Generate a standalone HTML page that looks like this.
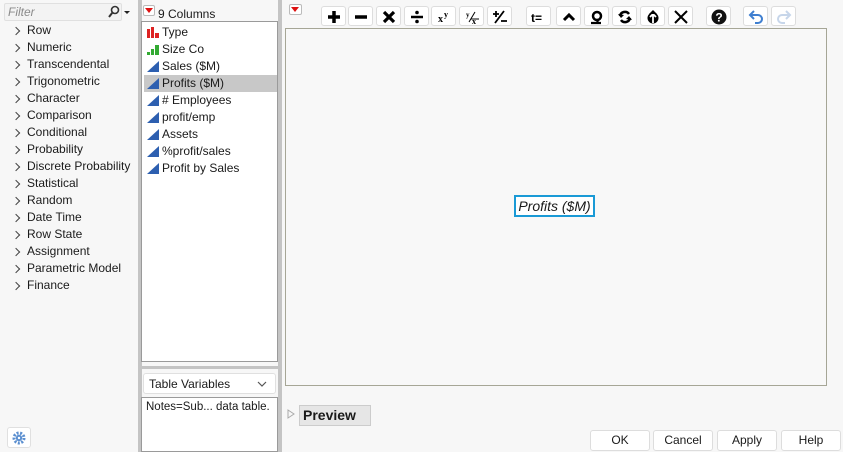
<!DOCTYPE html>
<html><head><meta charset="utf-8"><style>
*{margin:0;padding:0;box-sizing:border-box}
body{width:843px;height:452px;background:#f7f7f7;font-family:"Liberation Sans",sans-serif;font-size:12px;color:#1a1a1a;position:relative;overflow:hidden}
.a{position:absolute}
.li{position:absolute;left:27px;height:17px;line-height:17px;white-space:nowrap}
.li:before{content:"";position:absolute;left:-14px;top:6px;width:5px;height:5px;border-right:1.3px solid #444;border-top:1.3px solid #444;transform:rotate(45deg)}
.ci{position:absolute;left:2px;width:133px;height:17px;line-height:17px;padding-left:18px;white-space:nowrap}
.ic{position:absolute;left:3px;top:3px;width:12px;height:11px}
.tb{position:absolute;top:6px;width:25px;height:20px;background:#fff;border:1px solid #ddd;border-radius:3px}
.tb svg{position:absolute;left:4px;top:2px}
.btn{position:absolute;top:430px;width:60px;height:21px;background:#fff;border:1px solid #ddd;border-radius:3px;text-align:center;line-height:19px;font-size:12px}
</style></head><body>
<div class="a" style="left:4px;top:3px;width:118px;height:18px;background:#f3f3f3;border:1px solid #e0e0e0;border-radius:2px"></div>
<div class="a" style="left:8px;top:5px;color:#8a8a8a;font-style:italic">Filter</div>
<svg class="a" style="left:107px;top:5px" width="24" height="14"><circle cx="8" cy="5" r="3.5" fill="none" stroke="#333" stroke-width="1.6"/><line x1="5.5" y1="7.5" x2="2" y2="12" stroke="#333" stroke-width="2"/><path d="M17 6h6l-3 3z" fill="#222"/></svg>
<div class="li" style="top:22px">Row</div>
<div class="li" style="top:39px">Numeric</div>
<div class="li" style="top:56px">Transcendental</div>
<div class="li" style="top:73px">Trigonometric</div>
<div class="li" style="top:90px">Character</div>
<div class="li" style="top:107px">Comparison</div>
<div class="li" style="top:124px">Conditional</div>
<div class="li" style="top:141px">Probability</div>
<div class="li" style="top:158px">Discrete Probability</div>
<div class="li" style="top:175px">Statistical</div>
<div class="li" style="top:192px">Random</div>
<div class="li" style="top:209px">Date Time</div>
<div class="li" style="top:226px">Row State</div>
<div class="li" style="top:243px">Assignment</div>
<div class="li" style="top:260px">Parametric Model</div>
<div class="li" style="top:277px">Finance</div>
<div class="a" style="left:7px;top:427px;width:24px;height:21px;background:#fff;border:1px solid #e0e0e0;border-radius:3px"></div>
<svg class="a" style="left:12px;top:431px" width="14" height="14"><circle cx="7" cy="7" r="5" fill="none" stroke="#5b8fd0" stroke-width="3" stroke-dasharray="2 1.5"/><circle cx="7" cy="7" r="3.2" fill="#5b8fd0"/><circle cx="7" cy="7" r="1.2" fill="#fff"/></svg>
<div class="a" style="left:138px;top:0;width:4px;height:452px;background:#c4c4c4"></div>
<div class="a" style="left:278px;top:0;width:4px;height:452px;background:#c4c4c4"></div>
<div class="a" style="left:142px;top:0;width:136px;height:452px;background:#f7f7f7"></div>
<div class="a" style="left:143px;top:5px;width:12px;height:11px;background:#fff;border:1px solid #bbb;border-radius:2px"></div>
<svg class="a" style="left:145px;top:8px" width="9" height="6"><path d="M0 0h8l-4 5z" fill="#d11"/></svg>
<div class="a" style="left:158px;top:7px">9 Columns</div>
<div class="a" style="left:141px;top:21px;width:137px;height:341px;background:#fff;border:1px solid #9a9a9a">
<div class="ci" style="top:2px"><svg class="ic" viewBox="0 0 12 11"><rect x="0" y="2" width="3" height="9" fill="#d22"/><rect x="4" y="0" width="3" height="11" fill="#d22"/><rect x="8" y="6" width="4" height="5" fill="#d22"/></svg>Type</div>
<div class="ci" style="top:19px"><svg class="ic" viewBox="0 0 12 11"><rect x="0" y="8" width="3" height="3" fill="#3a3"/><rect x="4" y="5" width="3" height="6" fill="#3a3"/><rect x="8" y="1" width="4" height="10" fill="#3a3"/></svg>Size Co</div>
<div class="ci" style="top:36px"><svg class="ic" viewBox="0 0 12 11"><path d="M0 11L12 0v11z" fill="#2d5fb0"/></svg>Sales ($M)</div>
<div class="ci" style="top:53px;background:#c8c8c8"><svg class="ic" viewBox="0 0 12 11"><path d="M0 11L12 0v11z" fill="#2d5fb0"/></svg>Profits ($M)</div>
<div class="ci" style="top:70px"><svg class="ic" viewBox="0 0 12 11"><path d="M0 11L12 0v11z" fill="#2d5fb0"/></svg># Employees</div>
<div class="ci" style="top:87px"><svg class="ic" viewBox="0 0 12 11"><path d="M0 11L12 0v11z" fill="#2d5fb0"/></svg>profit/emp</div>
<div class="ci" style="top:104px"><svg class="ic" viewBox="0 0 12 11"><path d="M0 11L12 0v11z" fill="#2d5fb0"/></svg>Assets</div>
<div class="ci" style="top:121px"><svg class="ic" viewBox="0 0 12 11"><path d="M0 11L12 0v11z" fill="#2d5fb0"/></svg>%profit/sales</div>
<div class="ci" style="top:138px"><svg class="ic" viewBox="0 0 12 11"><path d="M0 11L12 0v11z" fill="#2d5fb0"/></svg>Profit by Sales</div>
</div>
<div class="a" style="left:142px;top:366px;width:136px;height:3px;background:#c4c4c4"></div>
<div class="a" style="left:143px;top:373px;width:133px;height:21px;background:#fff;border:1px solid #e0e0e0;border-radius:3px;padding:3px 0 0 5px">Table Variables<svg style="position:absolute;left:113px;top:7px" width="10" height="6"><path d="M1 1l4 4 4-4" fill="none" stroke="#555" stroke-width="1.2"/></svg></div>
<div class="a" style="left:141px;top:397px;width:137px;height:55px;background:#fff;border:1px solid #9a9a9a;padding:3px 0 0 4px;font-size:11.5px">Notes=Sub... data table.</div>
<div class="a" style="left:289px;top:4px;width:13px;height:11px;background:#fff;border:1px solid #bbb;border-radius:2px"></div>
<svg class="a" style="left:291px;top:7px" width="9" height="6"><path d="M0 0h8l-4 5z" fill="#d11"/></svg>
<div class="tb" style="left:321px"><svg width="16" height="16"><path d="M8 2v12M2 8h12" stroke="#000" stroke-width="3.5"/></svg></div>
<div class="tb" style="left:348px"><svg width="16" height="16"><path d="M2 8h12" stroke="#000" stroke-width="3.5"/></svg></div>
<div class="tb" style="left:376px"><svg width="16" height="16"><path d="M3 3l10 10M13 3L3 13" stroke="#000" stroke-width="3.2"/></svg></div>
<div class="tb" style="left:404px"><svg width="16" height="16"><path d="M2 8h12" stroke="#000" stroke-width="2.5"/><circle cx="8" cy="3.5" r="1.8"/><circle cx="8" cy="12.5" r="1.8"/></svg></div>
<div class="tb" style="left:431px"><svg width="16" height="16"><text x="2" y="13" font-family="Liberation Serif" font-weight="bold" font-size="10">x</text><text x="8" y="8" font-family="Liberation Serif" font-weight="bold" font-size="8">y</text></svg></div>
<div class="tb" style="left:459px"><svg width="16" height="16"><text x="2" y="8" font-family="Liberation Serif" font-weight="bold" font-size="7">y</text><path d="M5 13L11 3" stroke="#000"/><text x="8" y="15" font-family="Liberation Serif" font-weight="bold" font-size="8">x</text><path d="M7 10h8" stroke="#000"/></svg></div>
<div class="tb" style="left:487px"><svg width="16" height="16"><path d="M1 5h6M4 2v6M3 14L12 2M9 12h6" stroke="#000" stroke-width="1.8"/></svg></div>
<div class="tb" style="left:526px"><svg width="16" height="16"><text x="0" y="13" font-family="Liberation Sans" font-weight="bold" font-size="12">t=</text></svg></div>
<div class="tb" style="left:556px"><svg width="16" height="16"><path d="M3 11l5-5 5 5" fill="none" stroke="#000" stroke-width="3"/></svg></div>
<div class="tb" style="left:584px"><svg width="16" height="16"><circle cx="8" cy="7" r="4" fill="none" stroke="#000" stroke-width="2.5"/><path d="M9 10l-1 5M2 14h10" stroke="#000" stroke-width="2.2"/></svg></div>
<div class="tb" style="left:612px"><svg width="16" height="16"><path d="M12 5A5 5 0 0 0 3 7M4 11a5 5 0 0 0 9-2" fill="none" stroke="#000" stroke-width="2.5"/><path d="M1 5l3 4 3-3zM15 11l-3-4-3 3z" fill="#000"/></svg></div>
<div class="tb" style="left:640px"><svg width="16" height="16"><circle cx="8" cy="9" r="5.5" fill="#000"/><path d="M8 14V6M5 8l3-3 3 3" stroke="#fff" stroke-width="1.8" fill="none"/><path d="M8 1l-4 4h8z" fill="#000"/></svg></div>
<div class="tb" style="left:668px"><svg width="16" height="16"><path d="M2 2l12 12M14 2L2 14" stroke="#000" stroke-width="2"/></svg></div>
<div class="tb" style="left:706px"><svg width="16" height="16"><circle cx="8" cy="8" r="7.5" fill="#111"/><text x="8" y="12.5" text-anchor="middle" fill="#fff" font-family="Liberation Sans" font-weight="bold" font-size="12">?</text></svg></div>
<div class="tb" style="left:743px"><svg width="16" height="16"><path d="M3 6h7a4 4 0 0 1 0 8H7" fill="none" stroke="#3f7fd0" stroke-width="2"/><path d="M6 2L2 6l4 4" fill="none" stroke="#3f7fd0" stroke-width="2"/></svg></div>
<div class="tb" style="left:771px"><svg width="16" height="16"><path d="M13 6H6a4 4 0 0 0 0 8h3" fill="none" stroke="#c7d6ea" stroke-width="2"/><path d="M10 2l4 4-4 4" fill="none" stroke="#c7d6ea" stroke-width="2"/></svg></div>
<div class="a" style="left:285px;top:28px;width:542px;height:358px;background:#f8f8f8;border:1px solid #a6a696"></div>
<div class="a" style="left:514px;top:195px;width:81px;height:22px;border:2px solid #1a9ad6;background:#fff;font-style:italic;font-size:14px;line-height:18px;text-align:center">Profits ($M)</div>
<svg class="a" style="left:287px;top:409px" width="8" height="10"><path d="M1 1l6 4-6 4z" fill="none" stroke="#aaa"/></svg>
<div class="a" style="left:299px;top:405px;width:72px;height:21px;background:#e6e6e6;border:1px solid #ccc;font-weight:bold;font-size:14px;line-height:19px;padding-left:3px">Preview</div>
<div class="btn" style="left:590px">OK</div>
<div class="btn" style="left:653px">Cancel</div>
<div class="btn" style="left:717px">Apply</div>
<div class="btn" style="left:781px">Help</div>
</body></html>
